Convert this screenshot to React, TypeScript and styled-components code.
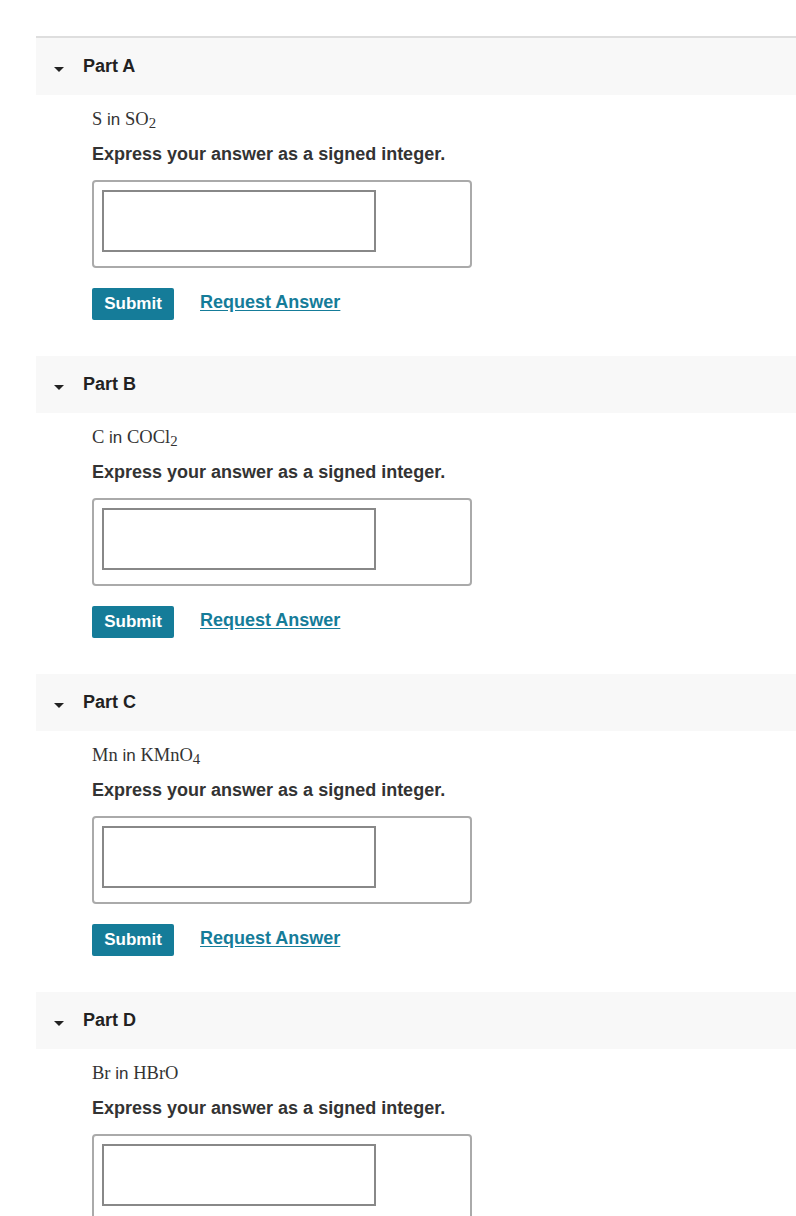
import React from "react";
import styled, { createGlobalStyle } from "styled-components";

const Global = createGlobalStyle`
  html, body { margin: 0; padding: 0; background: #fff; }
  body { font-family: "Liberation Sans", Arial, sans-serif; color: #333; }
`;

const Page = styled.div`
  padding: 36px 0 0 36px;
`;

const List = styled.div`
  border-top: 2px solid #dedede;
`;

const Header = styled.div`
  height: 57px;
  background: #f8f8f8;
  display: flex;
  align-items: center;
  padding-left: 18px;
`;

const Caret = styled.span`
  width: 0;
  height: 0;
  border-left: 5px solid transparent;
  border-right: 5px solid transparent;
  border-top: 5px solid #222;
  margin-top: 5px;
  margin-right: 19px;
`;

const Title = styled.span`
  font-weight: bold;
  font-size: 18px;
  color: #222;
`;

const Body = styled.div`
  padding: 15px 0 36px 56px;
`;

const Prompt = styled.div`
  height: 20px;
  font-size: 17px;
  line-height: 20px;
  color: #333;
`;

const Math = styled.span`
  font-family: "Liberation Serif", "Times New Roman", serif;
  font-size: 18.5px;
  line-height: 1;
`;

const Sub = styled.span`
  font-size: 0.8em;
  vertical-align: -0.18em;
  line-height: 0;
`;

const Instruction = styled.div`
  margin-top: 14px;
  font-size: 18px;
  line-height: 20px;
  font-weight: bold;
  color: #333;
`;

const AnswerBox = styled.div`
  margin-top: 16px;
  width: 380px;
  box-sizing: border-box;
  border: 2px solid #aaa;
  border-radius: 4px;
  padding: 8px 8px 14px;
`;

const Field = styled.input`
  display: block;
  width: 274px;
  height: 62px;
  box-sizing: border-box;
  border: 2px solid #888;
  margin: 0;
  padding: 0 6px;
  font-size: 16px;
  outline: none;
`;

const Actions = styled.div`
  margin-top: 20px;
  display: flex;
  align-items: center;
  gap: 26px;
`;

const SubmitButton = styled.button`
  width: 82px;
  height: 32px;
  border: none;
  border-radius: 2px;
  background: #157c99;
  color: #fff;
  font-family: "Liberation Sans", Arial, sans-serif;
  font-weight: bold;
  font-size: 17px;
  padding: 0;
  cursor: pointer;
`;

const LinkButton = styled.a`
  font-weight: bold;
  font-size: 18px;
  color: #157c99;
  text-decoration: underline;
  text-underline-offset: 2px;
  cursor: pointer;
  margin-top: -3px;
`;

type Part = { label: string; prompt: React.ReactNode };

const parts: Part[] = [
  {
    label: "Part A",
    prompt: (
      <>
        <Math>S</Math> in <Math>SO<Sub>2</Sub></Math>
      </>
    ),
  },
  {
    label: "Part B",
    prompt: (
      <>
        <Math>C</Math> in <Math>COCl<Sub>2</Sub></Math>
      </>
    ),
  },
  {
    label: "Part C",
    prompt: (
      <>
        <Math>Mn</Math> in <Math>KMnO<Sub>4</Sub></Math>
      </>
    ),
  },
  {
    label: "Part D",
    prompt: (
      <>
        <Math>Br</Math> in <Math>HBrO</Math>
      </>
    ),
  },
];

export default function App() {
  return (
    <Page>
      <Global />
      <List>
        {parts.map((p) => (
          <section key={p.label}>
            <Header>
              <Caret />
              <Title>{p.label}</Title>
            </Header>
            <Body>
              <Prompt>{p.prompt}</Prompt>
              <Instruction>Express your answer as a signed integer.</Instruction>
              <AnswerBox>
                <Field type="text" aria-label={`${p.label} answer`} />
              </AnswerBox>
              <Actions>
                <SubmitButton>Submit</SubmitButton>
                <LinkButton>Request Answer</LinkButton>
              </Actions>
            </Body>
          </section>
        ))}
      </List>
    </Page>
  );
}
